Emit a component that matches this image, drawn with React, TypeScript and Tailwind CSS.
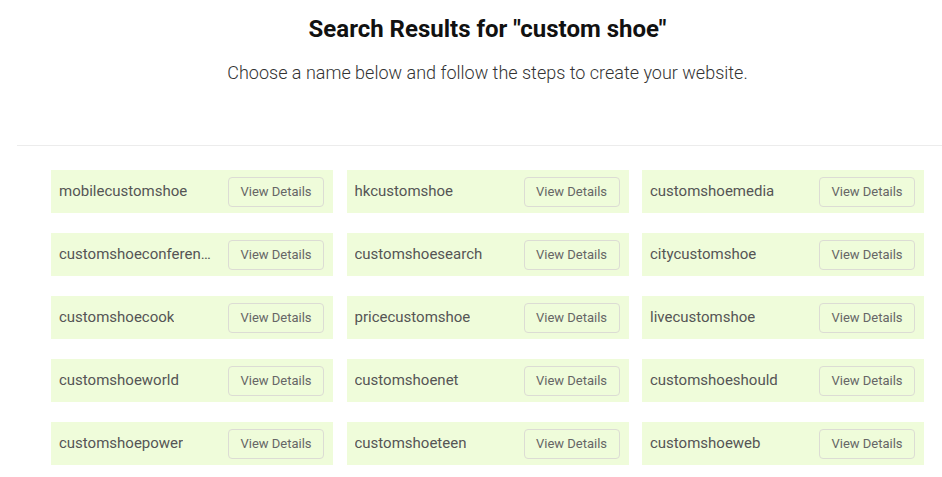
import React from 'react';

const names: string[] = [
  'mobilecustomshoe',
  'hkcustomshoe',
  'customshoemedia',
  'customshoeconference',
  'customshoesearch',
  'citycustomshoe',
  'customshoecook',
  'pricecustomshoe',
  'livecustomshoe',
  'customshoeworld',
  'customshoenet',
  'customshoeshould',
  'customshoepower',
  'customshoeteen',
  'customshoeweb',
];

const ResultCard: React.FC<{ name: string }> = ({ name }) => (
  <div className="flex h-[43px] items-center justify-between bg-[#effcda] pl-2 pr-[9px]">
    <span className="min-w-0 truncate text-[15px] text-[#555]">{name}</span>
    <button className="ml-3 h-[30px] w-[96px] shrink-0 rounded-[4px] border border-[#dcdcd4] text-[13px] text-[#666]">
      View Details
    </button>
  </div>
);

export default function App() {
  return (
    <div className="h-[477px] w-[942px] overflow-hidden bg-white" style={{ fontFamily: 'Roboto, "Liberation Sans", sans-serif' }}>
      <div className="ml-[17px] w-[941px]">
        <div className="flex h-[145px] flex-col items-center">
          <h1 className="mt-[14px] text-[24px] font-bold leading-[30px] text-[#111]">Search Results for "custom shoe"</h1>
          <p className="mt-[16px] text-[18px] font-light leading-[26px] text-[#333]">
            Choose a name below and follow the steps to create your website.
          </p>
        </div>
        <div className="border-t border-[#ececec] pl-[34px] pt-[24px]">
          <div className="grid grid-cols-[282px_282px_282px] gap-x-[13.5px] gap-y-[20px]">
            {names.map((n) => (
              <ResultCard key={n} name={n} />
            ))}
          </div>
        </div>
      </div>
    </div>
  );
}
